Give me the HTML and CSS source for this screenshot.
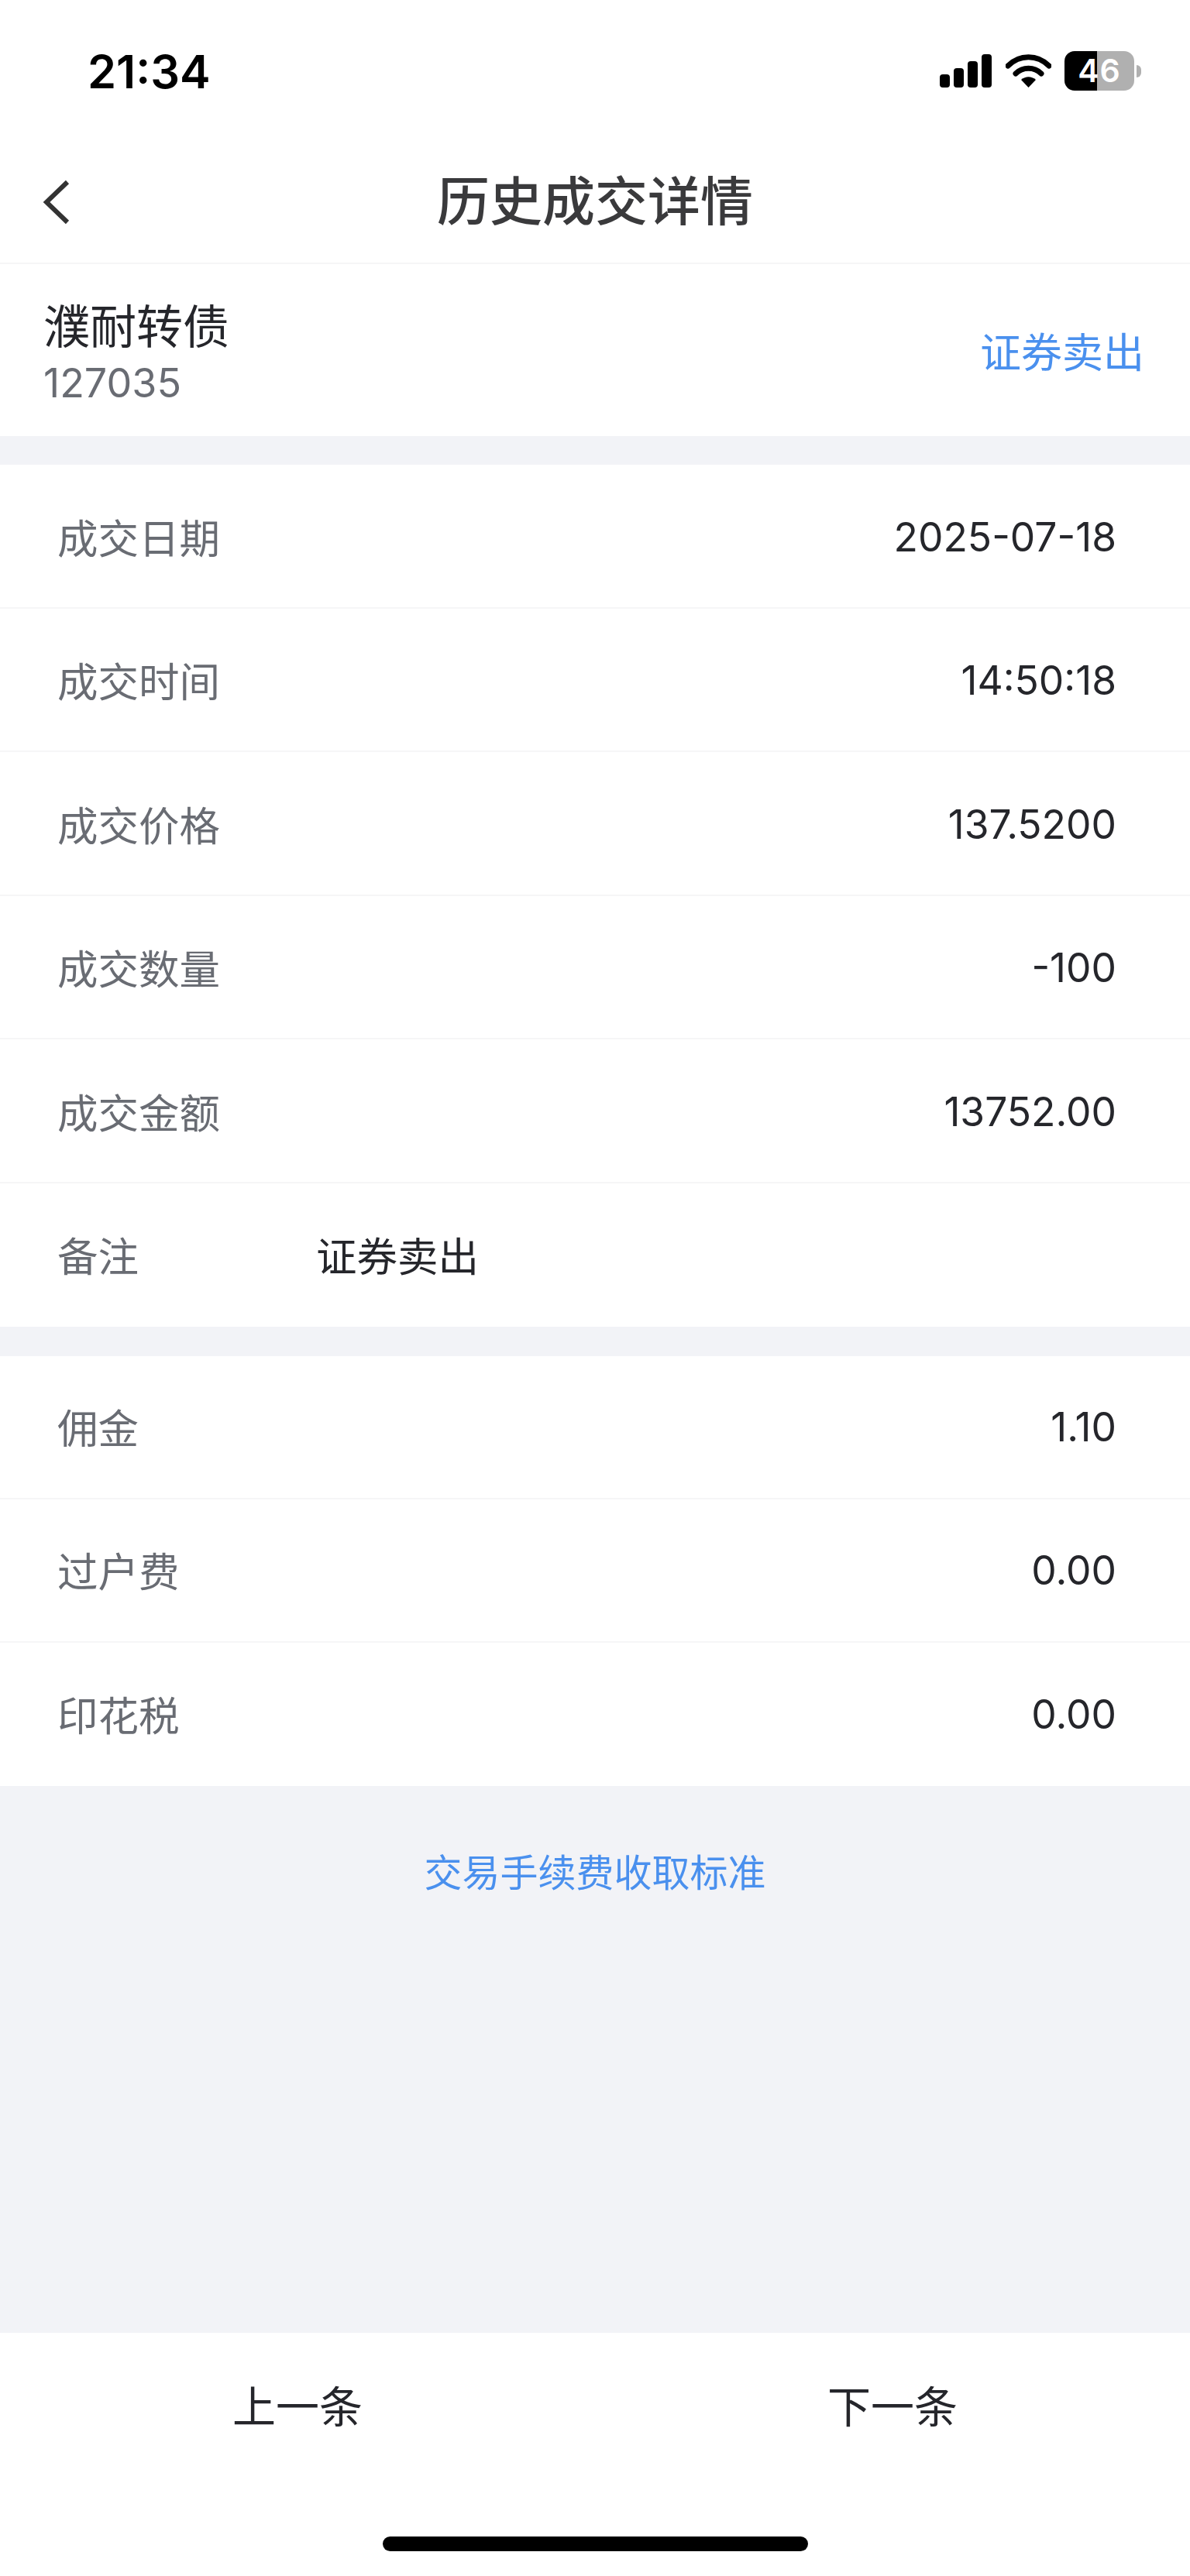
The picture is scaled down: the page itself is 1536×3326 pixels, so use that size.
FILE: index.html
```html
<!DOCTYPE html>
<html lang="zh-CN">
<head>
    <meta charset="UTF-8">
    <meta name="viewport" content="width=device-width, initial-scale=1.0">
    <title>历史成交详情</title>
    <link rel="stylesheet" href="styles.css">
</head>
<body>
    <div class="page">
        <!-- Status bar -->
        <div class="status-bar">
            <span class="clock">21:34</span>
            <div class="status-icons">
                <div class="signal">
                    <span class="signal-bar bar-1"></span>
                    <span class="signal-bar bar-2"></span>
                    <span class="signal-bar bar-3"></span>
                    <span class="signal-bar bar-4"></span>
                </div>
                <svg class="wifi" width="59" height="45" viewBox="0 0 59 45">
                    <path d="M3 17 C18 2 41 2 56 17" fill="none" stroke="#000" stroke-width="7" stroke-linecap="round"/>
                    <path d="M13 27 C22 18 37 18 46 27" fill="none" stroke="#000" stroke-width="7" stroke-linecap="round"/>
                    <path d="M20 35 C26 30 33 30 39 35 L29.5 45 Z" fill="#000"/>
                </svg>
                <div class="battery">
                    <div class="battery-body">46</div>
                    <span class="battery-cap"></span>
                </div>
            </div>
        </div>

        <!-- Nav -->
        <div class="nav-bar">
            <svg class="back-icon" width="36" height="58" viewBox="0 0 36 58">
                <path d="M32 3 L5 29 L32 55" fill="none" stroke="#333" stroke-width="6"/>
            </svg>
            <h1 class="nav-title">历史成交详情</h1>
        </div>

        <div class="stock-head">
            <div class="stock-info">
                <div class="stock-name">濮耐转债</div>
                <div class="stock-code">127035</div>
            </div>
            <div class="stock-type">证券卖出</div>
        </div>

        <div class="section">
            <div class="row"><span class="row-label">成交日期</span><span class="row-value">2025-07-18</span></div>
            <div class="row"><span class="row-label">成交时间</span><span class="row-value">14:50:18</span></div>
            <div class="row"><span class="row-label">成交价格</span><span class="row-value">137.5200</span></div>
            <div class="row"><span class="row-label">成交数量</span><span class="row-value">-100</span></div>
            <div class="row"><span class="row-label">成交金额</span><span class="row-value">13752.00</span></div>
            <div class="row row-remark"><span class="row-label">备注</span><span class="row-note">证券卖出</span></div>
        </div>

        <div class="section section-fees">
            <div class="row"><span class="row-label">佣金</span><span class="row-value">1.10</span></div>
            <div class="row"><span class="row-label">过户费</span><span class="row-value">0.00</span></div>
            <div class="row"><span class="row-label">印花税</span><span class="row-value">0.00</span></div>
        </div>

        <div class="fee-area">
            <a href="#" class="fee-link">交易手续费收取标准</a>
        </div>

        <div class="footer">
            <div class="footer-btns">
                <div class="footer-btn">上一条</div>
                <div class="footer-btn">下一条</div>
            </div>
            <div class="home-bar"></div>
        </div>
    </div>
</body>
</html>
```

FILE: styles.css
```css
:root {
    --page-bg: #f2f3f7;
    --card-bg: #ffffff;
    --divider: #f6f6f7;
    --text-dark: #25262b;
    --text-gray: #696c73;
    --blue: #4a90ee;
}

* {
    margin: 0;
    padding: 0;
    box-sizing: border-box;
}

body {
    background-color: var(--page-bg);
    color: var(--text-dark);
    font-family: Inter, "Noto Sans CJK SC", sans-serif;
}

.page {
    height: 3326px;
    display: flex;
    flex-direction: column;
}

/* status bar */
.status-bar {
    height: 176px;
    background-color: var(--card-bg);
    display: flex;
    justify-content: space-between;
    align-items: flex-start;
    padding: 66px 63px 0 113px;
}

.clock {
    font-size: 59.5px;
    font-weight: 600;
    line-height: 53px;
    color: #000;
}

.status-icons {
    display: flex;
    align-items: flex-start;
}

.signal {
    display: flex;
    align-items: flex-end;
    gap: 5px;
    height: 43px;
    margin-top: 4px;
    margin-right: 18px;
}

.signal-bar {
    width: 13px;
    background-color: #000;
    border-radius: 4px;
}

.bar-1 { height: 17px; }
.bar-2 { height: 25px; }
.bar-3 { height: 34px; }
.bar-4 { height: 43px; }

.wifi {
    margin-top: 2px;
    margin-right: 17px;
}

.battery {
    display: flex;
    align-items: center;
    gap: 3px;
}

.battery-body {
    width: 90px;
    height: 51px;
    border-radius: 13px;
    background: linear-gradient(to right, #000 0, #000 46.5%, #b0b0b0 46.5%, #b0b0b0 100%);
    color: #fff;
    font-size: 41px;
    font-weight: 600;
    letter-spacing: 1px;
    line-height: 51px;
    text-align: center;
}

.battery-cap {
    width: 6px;
    height: 16px;
    background-color: #b0b0b0;
    border-radius: 0 6px 6px 0;
}

/* nav */
.nav-bar {
    position: relative;
    height: 165px;
    background-color: var(--card-bg);
    border-bottom: 2px solid var(--divider);
    display: flex;
    align-items: center;
    justify-content: center;
}

.back-icon {
    position: absolute;
    left: 55px;
    top: 56px;
}

.nav-title {
    font-size: 68px;
    font-weight: 500;
    color: #3a3a3c;
    line-height: 1;
    margin-top: 4px;
}

/* stock header */
.stock-head {
    height: 222px;
    background-color: var(--card-bg);
    display: flex;
    justify-content: space-between;
    align-items: center;
    padding: 0 59px 0 56px;
    margin-bottom: 37px;
}

.stock-info {
    padding-top: 9px;
}

.stock-name {
    font-size: 60px;
    line-height: 76px;
    color: var(--text-dark);
}

.stock-code {
    font-size: 52px;
    line-height: 70px;
    color: var(--text-gray);
}

.stock-type {
    font-size: 53px;
    color: var(--blue);
}

/* detail rows */
.section {
    background-color: var(--card-bg);
    margin-bottom: 38px;
}

.section-fees {
    margin-bottom: 0;
}

.row {
    height: 185.5px;
    display: flex;
    align-items: center;
    justify-content: space-between;
    padding: 0 95px 0 74px;
    border-bottom: 2px solid var(--divider);
    font-size: 52.5px;
}

.section-fees .row {
    height: 185px;
    padding-bottom: 3px;
}

.row:last-child {
    border-bottom: none;
}

.row-label {
    color: var(--text-gray);
}

.row-value {
    font-size: 51.5px;
    margin-top: 2px;
    color: var(--text-dark);
}

.row-remark {
    justify-content: flex-start;
    padding-bottom: 2px;
}

.row-remark .row-label {
    width: 334px;
}

.row-note {
    color: var(--text-dark);
}

/* fee link */
.fee-area {
    flex: 1;
    padding-top: 78px;
    text-align: center;
}

.fee-link {
    font-size: 49px;
    line-height: 70px;
    color: var(--blue);
    text-decoration: none;
}

/* footer */
.footer {
    height: 314px;
    background-color: var(--card-bg);
    display: flex;
    flex-direction: column;
    align-items: center;
}

.footer-btns {
    width: 100%;
    display: flex;
    padding-top: 56px;
}

.footer-btn {
    flex: 1;
    text-align: center;
    font-size: 56px;
    line-height: 80px;
    color: var(--text-dark);
}

.home-bar {
    width: 549px;
    height: 19px;
    margin-top: 127px;
    background-color: #000;
    border-radius: 10px;
}
```
